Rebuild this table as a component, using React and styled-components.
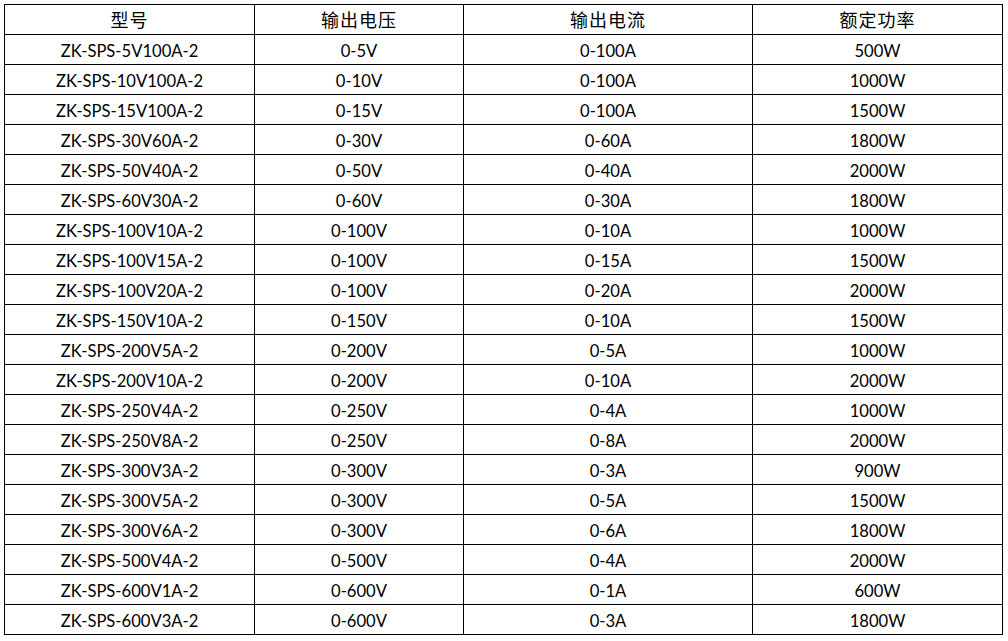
import React from "react";
import styled, { createGlobalStyle } from "styled-components";

const Global = createGlobalStyle`
  html, body { margin: 0; padding: 0; background: #fff; }
  body { font-family: Lato, "Noto Sans CJK SC", sans-serif; color: #000; }
`;

const Page = styled.div`
  padding: 4px 0 0 4px;
`;

const Table = styled.table`
  border-collapse: collapse;
  table-layout: fixed;
  width: 998px;
`;

const Cell = styled.td`
  border: 1px solid #000;
  height: 29px;
  padding: 3px 0 0 0;
  box-sizing: border-box;
  text-align: center;
  vertical-align: middle;
  font-family: Lato, "Noto Sans CJK SC", sans-serif;
  font-size: 16.6px;
  line-height: 26px;
  color: #000;
  white-space: nowrap;
`;

const Head = styled(Cell).attrs({ as: "th" })`
  padding: 0;
  line-height: 29px;
  font-weight: normal;
  font-family: "Noto Sans CJK SC", sans-serif;
  font-size: 18px;
  letter-spacing: 1px;
`;

const cols = [250, 209, 289, 250];

const rows = [
  ["ZK-SPS-5V100A-2", "0-5V", "0-100A", "500W"],
  ["ZK-SPS-10V100A-2", "0-10V", "0-100A", "1000W"],
  ["ZK-SPS-15V100A-2", "0-15V", "0-100A", "1500W"],
  ["ZK-SPS-30V60A-2", "0-30V", "0-60A", "1800W"],
  ["ZK-SPS-50V40A-2", "0-50V", "0-40A", "2000W"],
  ["ZK-SPS-60V30A-2", "0-60V", "0-30A", "1800W"],
  ["ZK-SPS-100V10A-2", "0-100V", "0-10A", "1000W"],
  ["ZK-SPS-100V15A-2", "0-100V", "0-15A", "1500W"],
  ["ZK-SPS-100V20A-2", "0-100V", "0-20A", "2000W"],
  ["ZK-SPS-150V10A-2", "0-150V", "0-10A", "1500W"],
  ["ZK-SPS-200V5A-2", "0-200V", "0-5A", "1000W"],
  ["ZK-SPS-200V10A-2", "0-200V", "0-10A", "2000W"],
  ["ZK-SPS-250V4A-2", "0-250V", "0-4A", "1000W"],
  ["ZK-SPS-250V8A-2", "0-250V", "0-8A", "2000W"],
  ["ZK-SPS-300V3A-2", "0-300V", "0-3A", "900W"],
  ["ZK-SPS-300V5A-2", "0-300V", "0-5A", "1500W"],
  ["ZK-SPS-300V6A-2", "0-300V", "0-6A", "1800W"],
  ["ZK-SPS-500V4A-2", "0-500V", "0-4A", "2000W"],
  ["ZK-SPS-600V1A-2", "0-600V", "0-1A", "600W"],
  ["ZK-SPS-600V3A-2", "0-600V", "0-3A", "1800W"],
];

export default function App() {
  return (
    <Page>
      <Global />
      <Table>
        <colgroup>
          {cols.map((w, i) => (
            <col key={i} style={{ width: w }} />
          ))}
        </colgroup>
        <thead>
          <tr>
            <Head>型号</Head>
            <Head>输出电压</Head>
            <Head>输出电流</Head>
            <Head>额定功率</Head>
          </tr>
        </thead>
        <tbody>
          {rows.map((r, i) => (
            <tr key={i}>
              {r.map((c, j) => (
                <Cell key={j}>{c}</Cell>
              ))}
            </tr>
          ))}
        </tbody>
      </Table>
    </Page>
  );
}
